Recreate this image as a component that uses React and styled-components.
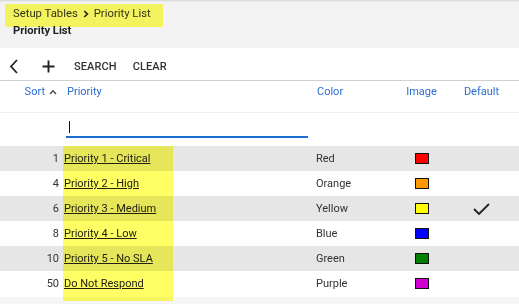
import React from "react";
import styled, { createGlobalStyle } from "styled-components";

const Global = createGlobalStyle`
  html, body { margin: 0; padding: 0; background: #fff; }
  body { font-family: Roboto, "Noto Sans", Arial, sans-serif; color: #333; }
  * { box-sizing: border-box; }
`;

const Page = styled.div`
  position: relative;
  width: 519px;
  height: 304px;
  overflow: hidden;
  background: #fff;
  display: flex;
  flex-direction: column;
`;

const Header = styled.div`
  height: 48px;
  background: #f3f3f3;
  box-shadow: inset 0 2px 2px -1px rgba(0,0,0,0.12);
  padding: 7px 0 0 13px;
  display: flex;
  flex-direction: column;
`;

const Crumbs = styled.div`
  display: flex;
  align-items: center;
  gap: 5px;
  font-size: 11.3px;
  line-height: 14px;
  color: #333;
`;

const Title = styled.div`
  margin-top: 3px;
  font-size: 11.2px;
  font-weight: 700;
  line-height: 14px;
  color: #222;
`;

const Toolbar = styled.div`
  height: 33px;
  display: flex;
  align-items: center;
  padding: 4px 0 0 9px;
  border-bottom: 1px solid #d0d0d0;
`;

const IconBtn = styled.button`
  border: 0;
  background: none;
  padding: 0;
  margin-right: ${(p) => p.$mr || 0}px;
  display: flex;
  align-items: center;
  color: #222;
`;

const TextBtn = styled.button`
  border: 0;
  background: none;
  padding: 0;
  margin-right: ${(p) => p.$mr || 0}px;
  font-family: Roboto, Arial, sans-serif;
  font-size: 11px;
  font-weight: 500;
  color: #333;
  letter-spacing: 0.1px;
`;

const Grid = styled.div`
  display: grid;
  grid-template-columns: 62px 250px 80px 59px 61px 1fr;
  align-items: center;
`;

const HeadRow = styled(Grid)`
  height: 32px;
  align-items: start;
  padding-top: 4px;
  border-bottom: 1px solid #eeeeee;
  font-size: 11px;
  color: #2c6fd1;
`;

const HeadCell = styled.div`
  display: flex;
  align-items: center;
  justify-content: ${(p) => p.$align || "flex-start"};
  padding-left: ${(p) => p.$pl || 0}px;
  padding-right: ${(p) => p.$pr || 0}px;
  gap: 4px;
`;

const FilterRow = styled(Grid)`
  height: 33px;
  align-items: start;
`;

const FilterInput = styled.div`
  grid-column: 2 / 3;
  margin: 7px 4px 0 4px;
  height: 18px;
  border-bottom: 2px solid #1a6fd0;
  display: flex;
  align-items: flex-start;
  padding-left: 3px;
  padding-top: 1px;
`;

const Caret = styled.span`
  width: 1px;
  height: 12px;
  background: #111;
`;

const Row = styled(Grid)`
  height: 25px;
  background: ${(p) => (p.$alt ? "#e6e6e6" : "#fff")};
  font-size: 11px;
  color: #333;
`;

const Num = styled.div`
  text-align: right;
  padding-right: 3px;
`;

const Link = styled.a`
  color: #222;
  text-decoration: underline;
  padding-left: 2px;
`;

const ColorName = styled.div`
  padding-left: 4px;
`;

const Center = styled.div`
  display: flex;
  justify-content: center;
  align-items: center;
`;

const Swatch = styled.span`
  width: 14px;
  height: 11px;
  border: 1px solid #111;
  background: ${(p) => p.$c};
`;

const Footer = styled.div`
  flex: 1;
  margin-top: 1px;
  background: #f5f5f5;
`;

const Highlight = styled.div`
  position: absolute;
  left: ${(p) => p.$x}px;
  top: ${(p) => p.$y}px;
  width: ${(p) => p.$w}px;
  height: ${(p) => p.$h}px;
  background: #ffff4a;
  mix-blend-mode: multiply;
  opacity: 0.85;
  pointer-events: none;
`;

const rows = [
  { n: 1, p: "Priority 1 - Critical", c: "Red", s: "#ff0000" },
  { n: 4, p: "Priority 2 - High", c: "Orange", s: "#ff9900" },
  { n: 6, p: "Priority 3 - Medium", c: "Yellow", s: "#ffff00", d: true },
  { n: 8, p: "Priority 4 - Low", c: "Blue", s: "#0000ff" },
  { n: 10, p: "Priority 5 - No SLA", c: "Green", s: "#008000" },
  { n: 50, p: "Do Not Respond", c: "Purple", s: "#d000d0" },
];

export default function App() {
  return (
    <Page>
      <Global />
      <Header>
        <Crumbs>
          <span>Setup Tables</span>
          <svg width="6" height="8" viewBox="0 0 6 8">
            <path d="M1.2 1 L4.4 4 L1.2 7" fill="none" stroke="#222" strokeWidth="1.6" />
          </svg>
          <span>Priority List</span>
        </Crumbs>
        <Title>Priority List</Title>
      </Header>
      <Toolbar>
        <IconBtn $mr={23}>
          <svg width="10" height="15" viewBox="0 0 10 15">
            <path d="M8 1 L2 7.5 L8 14" fill="none" stroke="#222" strokeWidth="1.8" />
          </svg>
        </IconBtn>
        <IconBtn $mr={19}>
          <svg width="13" height="13" viewBox="0 0 13 13">
            <path d="M6.5 0.5 V12.5 M0.5 6.5 H12.5" fill="none" stroke="#222" strokeWidth="1.9" />
          </svg>
        </IconBtn>
        <TextBtn $mr={16}>SEARCH</TextBtn>
        <TextBtn>CLEAR</TextBtn>
      </Toolbar>
      <HeadRow>
        <HeadCell $align="flex-end" $pr={5}>
          <span>Sort</span>
          <svg width="8" height="6" viewBox="0 0 8 6">
            <path d="M1 5 L4 1.8 L7 5" fill="none" stroke="#444" strokeWidth="1.3" />
          </svg>
        </HeadCell>
        <HeadCell $pl={5}>Priority</HeadCell>
        <HeadCell $pl={5}>Color</HeadCell>
        <HeadCell $align="center">Image</HeadCell>
        <HeadCell $align="center">Default</HeadCell>
      </HeadRow>
      <FilterRow>
        <FilterInput>
          <Caret />
        </FilterInput>
      </FilterRow>
      {rows.map((r, i) => (
        <Row key={r.n} $alt={i % 2 === 0}>
          <Num>{r.n}</Num>
          <div>
            <Link>{r.p}</Link>
          </div>
          <ColorName>{r.c}</ColorName>
          <Center>
            <Swatch $c={r.s} />
          </Center>
          <Center>
            {r.d && (
              <svg width="17" height="12" viewBox="0 0 17 12">
                <path d="M1 6 L6 11 L16 1" fill="none" stroke="#222" strokeWidth="1.8" />
              </svg>
            )}
          </Center>
          <div />
        </Row>
      ))}
      <Footer />
      <Highlight $x={5} $y={4} $w={158} $h={23} />
      <Highlight $x={63} $y={146} $w={110} $h={155} />
    </Page>
  );
}
